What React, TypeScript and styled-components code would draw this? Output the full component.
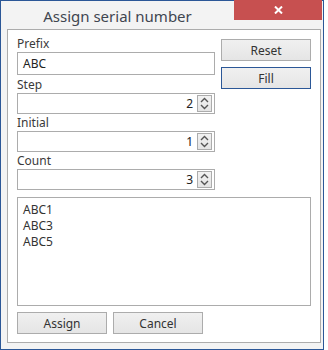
import React from "react";
import styled, { createGlobalStyle } from "styled-components";

const Global = createGlobalStyle`
  html, body { margin: 0; padding: 0; background: #ffffff; }
  * { box-sizing: border-box; }
`;

const Window = styled.div`
  width: 324px;
  height: 350px;
  border: 1px solid #2b5797;
  background: #f3f3f3;
  display: flex;
  flex-direction: column;
  font-family: "Noto Sans", "Open Sans", sans-serif;
  font-size: 12px;
  color: #333333;
`;

const TitleBar = styled.div`
  height: 28px;
  display: flex;
  align-items: flex-start;
`;

const Title = styled.div`
  flex: 1;
  text-align: center;
  font-size: 15px;
  line-height: 20px;
  padding-top: 5px;
  color: #3f4650;
`;

const CloseButton = styled.div`
  width: 88px;
  height: 20px;
  margin-top: -1px;
  margin-right: 1px;
  background: #c75050;
  color: #ffffff;
  display: flex;
  align-items: center;
  justify-content: center;
`;

const Panel = styled.div`
  margin-left: 6px;
  width: 314px;
  height: 314px;
  border: 1px solid #acacac;
  background: #ffffff;
  padding: 5px 9px 8px 9px;
  display: flex;
  flex-direction: column;
`;

const TopArea = styled.div`
  display: flex;
  gap: 6px;
`;

const Fields = styled.div`
  width: 198px;
  display: flex;
  flex-direction: column;
`;

const Side = styled.div`
  flex: 1;
  display: flex;
  flex-direction: column;
  gap: 6px;
  padding-top: 4px;
`;

const Label = styled.div`
  height: 17px;
  line-height: 18px;
  color: #3a3a3a;
`;

const TextBox = styled.div<{ $tall?: boolean }>`
  height: ${(p) => (p.$tall ? 23 : 21)}px;
  margin-bottom: ${(p) => (p.$tall ? 1 : 0)}px;
  border: 1px solid #acacac;
  background: #ffffff;
  display: flex;
  align-items: center;
  padding: 0 2px 0 5px;
  color: #222222;
`;

const Value = styled.span`
  flex: 1;
  text-align: right;
  padding-right: 4px;
`;

const Spinner = styled.div`
  width: 15px;
  height: 17px;
  border: 1px solid #acacac;
  background: linear-gradient(#f2f2f2, #e4e4e4);
  display: flex;
  flex-direction: column;
  align-items: center;
  justify-content: space-around;
`;

const Button = styled.div<{ $focused?: boolean }>`
  width: 90px;
  height: 22px;
  border: 1px solid ${(p) => (p.$focused ? "#2b5797" : "#acacac")};
  background: linear-gradient(#f0f0f0, #e5e5e5);
  display: flex;
  align-items: center;
  justify-content: center;
  color: #333333;
`;

const List = styled.div`
  margin-top: 7px;
  height: 109px;
  border: 1px solid #acacac;
  background: #ffffff;
  padding: 4px 5px;
  line-height: 16px;
  color: #333333;
`;

const Footer = styled.div`
  margin-top: 6px;
  display: flex;
  gap: 6px;
`;

const Chevron = ({ up }: { up?: boolean }) => (
  <svg width="9" height="6" viewBox="0 0 9 6">
    <path
      d={up ? "M1 5 L4.5 1.5 L8 5" : "M1 1 L4.5 4.5 L8 1"}
      fill="none"
      stroke="#555"
      strokeWidth="1.4"
    />
  </svg>
);

const NumberField = ({ label, value }: { label: string; value: number }) => (
  <>
    <Label>{label}</Label>
    <TextBox>
      <Value>{value}</Value>
      <Spinner>
        <Chevron up />
        <Chevron />
      </Spinner>
    </TextBox>
  </>
);

export default function App() {
  return (
    <>
      <Global />
      <Window>
        <TitleBar>
          <Title>Assign serial number</Title>
          <CloseButton>
            <svg width="9" height="8" viewBox="0 0 9 8">
              <path d="M1 0.5 L8 7.5 M8 0.5 L1 7.5" stroke="#fff" strokeWidth="2" />
            </svg>
          </CloseButton>
        </TitleBar>
        <Panel>
          <TopArea>
            <Fields>
              <Label>Prefix</Label>
              <TextBox $tall>ABC</TextBox>
              <NumberField label="Step" value={2} />
              <NumberField label="Initial" value={1} />
              <NumberField label="Count" value={3} />
            </Fields>
            <Side>
              <Button>Reset</Button>
              <Button $focused>Fill</Button>
            </Side>
          </TopArea>
          <List>
            <div>ABC1</div>
            <div>ABC3</div>
            <div>ABC5</div>
          </List>
          <Footer>
            <Button>Assign</Button>
            <Button>Cancel</Button>
          </Footer>
        </Panel>
      </Window>
    </>
  );
}
